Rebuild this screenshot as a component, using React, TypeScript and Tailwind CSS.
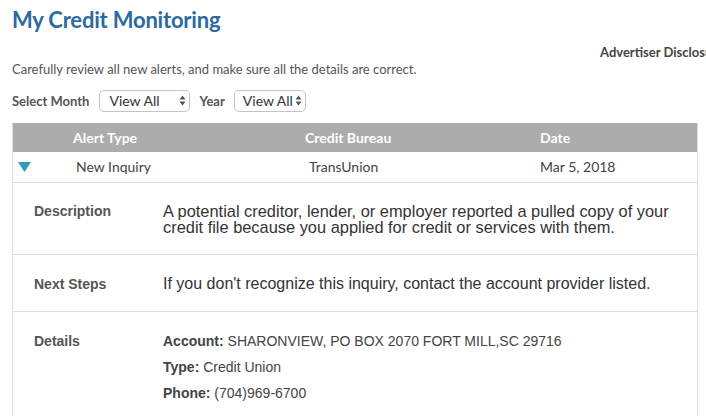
import React from 'react';

const Select = ({ width, pad }: { width: string; pad: string }) => (
  <div
    className={`${width} ${pad} h-[22px] flex items-center justify-between border border-[#c4c4c4] rounded-[5px] bg-white pr-[3px] text-[14px] font-normal text-[#333] whitespace-nowrap`}
  >
    <span>View All</span>
    <svg width="7" height="11" viewBox="0 0 7 11" className="text-[#555] shrink-0 ml-[2px]">
      <path d="M3.5 0.5 L6.5 4.5 H0.5 Z" fill="currentColor" />
      <path d="M3.5 10.5 L6.5 6.5 H0.5 Z" fill="currentColor" />
    </svg>
  </div>
);

const DetailRow = ({
  label,
  children,
  className,
}: {
  label: string;
  children: React.ReactNode;
  className: string;
}) => (
  <div className={`flex items-start border-b border-[#dedede] ${className}`}>
    <div className="w-[150px] pl-[21px] text-[14px] leading-[16px] font-bold text-[#555]">{label}</div>
    <div className="flex-1">{children}</div>
  </div>
);

export default function App() {
  return (
    <div
      className="w-[706px] h-[416px] overflow-hidden bg-white"
      style={{ fontFamily: 'Lato, "Open Sans", sans-serif' }}
    >
      <div className="pl-3 pt-[6px]">
        <h1 className="text-[22px] font-bold text-[#2c6aa0] leading-[28px] tracking-[-0.2px]">
          My Credit Monitoring
        </h1>
        <div className="flex mt-[9px] ml-[588px]">
          <span className="text-[13px] font-bold text-[#444] whitespace-nowrap">Advertiser Disclosure</span>
        </div>
        <p className="text-[13px] text-[#555] -mt-[3px] leading-[18px]">
          Carefully review all new alerts, and make sure all the details are correct.
        </p>
        <div className="flex items-center mt-[12px] text-[13px] font-bold text-[#555]">
          <span className="mt-[2px]">Select Month</span>
          <div className="ml-[10px]">
            <Select width="w-[91px]" pad="pl-[9px]" />
          </div>
          <span className="ml-[9px] mt-[2px]">Year</span>
          <div className="ml-[9px]">
            <Select width="w-[72px]" pad="pl-[8px]" />
          </div>
        </div>
      </div>

      <div className="ml-3 mt-[11px] w-[686px] border-l border-r border-[#dedede]">
        <div className="grid grid-cols-[60px_232px_235px_1fr] h-[29px] items-center bg-[#acacac] text-[14px] font-bold text-white">
          <span />
          <span>Alert Type</span>
          <span>Credit Bureau</span>
          <span>Date</span>
        </div>
        <div className="grid grid-cols-[60px_232px_235px_1fr] h-[31px] items-center border-b border-[#dedede] text-[14px] text-[#444]">
          <span className="pl-[5px] flex items-center">
            <svg width="13" height="10" viewBox="0 0 13 10">
              <path d="M0 0 H13 L6.5 10 Z" fill="#2b9db4" />
            </svg>
          </span>
          <span className="pl-[3px]">New Inquiry</span>
          <span className="pl-[4px]">TransUnion</span>
          <span>Mar 5, 2018</span>
        </div>

        <div style={{ fontFamily: '"Liberation Sans", Arial, sans-serif' }}>
          <DetailRow label="Description" className="h-[72px] pt-[20px]">
            <p className="text-[16.4px] leading-[16px] text-[#333]">
              A potential creditor, lender, or employer reported a pulled copy of your
              <br />
              credit file because you applied for credit or services with them.
            </p>
          </DetailRow>
          <DetailRow label="Next Steps" className="h-[57px] pt-[21px]">
            <p className="text-[16px] leading-[16px] text-[#333]">
              If you don't recognize this inquiry, contact the account provider listed.
            </p>
          </DetailRow>
          <div className="flex items-start pt-[21px] h-[120px]">
            <div className="w-[150px] pl-[21px] text-[14px] leading-[16px] font-bold text-[#555]">Details</div>
            <div className="flex-1 text-[14px] text-[#444] leading-[26px] -mt-[5px]">
              <div>
                <span className="font-bold">Account:</span> SHARONVIEW, PO BOX 2070 FORT MILL,SC 29716
              </div>
              <div>
                <span className="font-bold">Type:</span> Credit Union
              </div>
              <div>
                <span className="font-bold">Phone:</span> (704)969-6700
              </div>
            </div>
          </div>
        </div>
      </div>
    </div>
  );
}
